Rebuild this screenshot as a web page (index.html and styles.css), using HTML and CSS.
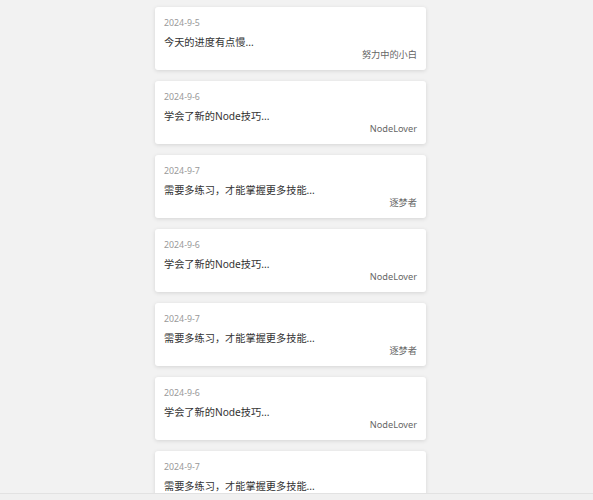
FILE: index.html
```html
<!DOCTYPE html>
<html lang="zh-CN">
<head>
    <meta charset="UTF-8">
    <meta name="viewport" content="width=device-width, initial-scale=1.0">
    <title>日记列表</title>
    <link rel="stylesheet" href="styles.css">
</head>
<body>
    <div class="list">
        <div class="note-card">
            <div class="note-date">2024-9-5</div>
            <div class="note-title">今天的进度有点慢...</div>
            <div class="note-author">努力中的小白</div>
        </div>
        <div class="note-card">
            <div class="note-date">2024-9-6</div>
            <div class="note-title">学会了新的Node技巧...</div>
            <div class="note-author">NodeLover</div>
        </div>
        <div class="note-card">
            <div class="note-date">2024-9-7</div>
            <div class="note-title">需要多练习，才能掌握更多技能...</div>
            <div class="note-author">逐梦者</div>
        </div>
        <div class="note-card">
            <div class="note-date">2024-9-6</div>
            <div class="note-title">学会了新的Node技巧...</div>
            <div class="note-author">NodeLover</div>
        </div>
        <div class="note-card">
            <div class="note-date">2024-9-7</div>
            <div class="note-title">需要多练习，才能掌握更多技能...</div>
            <div class="note-author">逐梦者</div>
        </div>
        <div class="note-card">
            <div class="note-date">2024-9-6</div>
            <div class="note-title">学会了新的Node技巧...</div>
            <div class="note-author">NodeLover</div>
        </div>
        <div class="note-card">
            <div class="note-date">2024-9-7</div>
            <div class="note-title">需要多练习，才能掌握更多技能...</div>
            <div class="note-author">逐梦者</div>
        </div>
    </div>

    <!-- bottom bar -->
    <div class="bottom-bar"></div>
</body>
</html>
```

FILE: styles.css
```css
body {
    margin: 0;
    padding: 0;
    background-color: #f2f2f2;
    font-family: "Noto Sans", "Noto Sans CJK SC", sans-serif;
    color: #333;
}

.list {
    width: 271px;
    margin: 0 auto;
    padding: 7px 0 20px;
    display: flex;
    flex-direction: column;
    gap: 11px;
    position: relative;
    left: -6px;
}

.note-card {
    background-color: #fff;
    border-radius: 3px;
    box-shadow: 0 1px 4px rgba(0, 0, 0, 0.12);
    padding: 11px 9px 0 9px;
    height: 63px;
    box-sizing: border-box;
}

.note-date {
    font-size: 8.8px;
    line-height: 11px;
    color: #999;
}

.note-title {
    font-size: 10.2px;
    line-height: 16px;
    margin-top: 5px;
    color: #333;
}

.note-author {
    font-size: 9.2px;
    line-height: 10px;
    text-align: right;
    color: #666;
}

.bottom-bar {
    position: fixed;
    left: 0;
    right: 0;
    bottom: 0;
    height: 6px;
    background-color: #f0f0f0;
    border-top: 1px solid #e2e2e2;
}
```
